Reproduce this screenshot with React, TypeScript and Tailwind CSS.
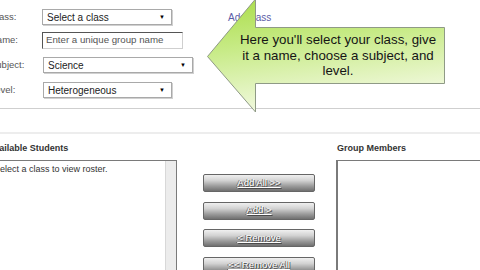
import React from 'react';

// ── Small form pieces ───────────────────────────────────────

function FakeSelect({ value, width }: { value: string; width: string }) {
    return (
        <div className={`${width} h-[16px] flex items-center justify-between pl-[4px] pr-[6px] bg-white border border-[#a9a9a9] shadow-[1px_1px_0_#d0d0d0] text-[10px] text-[#222]`}>
            <span>{value}</span>
            <span className="text-[6px] text-black">▼</span>
        </div>
    );
}

function FormRow({ label, children, className = '' }: { label: string; children: React.ReactNode; className?: string }) {
    return (
        <div className={`flex items-center ${className}`}>
            <div className="w-[52px] text-[9.5px] text-[#555]">{label}</div>
            {children}
        </div>
    );
}

function MoveButton({ label }: { label: string }) {
    return (
        <button className="w-[112px] h-[18px] rounded-[2px] border border-[#666] bg-[linear-gradient(180deg,#f0f0f0_0%,#d2d2d2_35%,#9a9a9a_70%,#707070_100%)] text-[9.5px] text-white underline [text-shadow:1px_1px_0_#4a4a4a,-1px_0_0_#6a6a6a] flex items-center justify-center">
            {label}
        </button>
    );
}

// ── Callout arrow overlay ───────────────────────────────────

function Callout() {
    return (
        <div className="absolute left-0 top-0 w-[480px] h-[120px] pointer-events-none">
            <svg width="480" height="120" className="absolute left-0 top-0">
                <defs>
                    <linearGradient id="green" x1="0" y1="0" x2="0.25" y2="1">
                        <stop offset="0%" stopColor="#aadd48" />
                        <stop offset="45%" stopColor="#c8eb88" />
                        <stop offset="100%" stopColor="#f2f9e0" />
                    </linearGradient>
                </defs>
                <polygon
                    points="207.5,56.5 255.5,-1 255.5,27.5 444.5,27.5 444.5,83.5 255.5,83.5 255.5,112"
                    fill="url(#green)"
                    stroke="#8f9a86"
                    strokeWidth="1"
                />
            </svg>
            <div className="absolute left-[213px] top-[32px] w-[250px] text-center text-[13.3px] leading-[15.5px] text-[#151515]">
                Here you'll select your class, give
                <br />
                it a name, choose a subject, and
                <br />
                level.
            </div>
        </div>
    );
}

export default function App() {
    return (
        <div className="relative w-[480px] h-[270px] overflow-hidden bg-white" style={{ fontFamily: '"Liberation Sans", Arial, sans-serif' }}>
            <div className="ml-[-10px] w-[500px]">
                {/* ── Group settings ──────────────────────── */}
                <div className="pt-[9px] h-[108px]">
                    <FormRow label="Class:">
                        <FakeSelect value="Select a class" width="w-[130px]" />
                        <a className="ml-[56px] text-[10px] text-[#5c5ca6]">Add class</a>
                    </FormRow>
                    <FormRow label="Name:" className="mt-[7px]">
                        <div className="w-[141px] h-[17px] flex items-center pl-[3px] border border-[#cfcfcf] border-t-[#555] border-l-[#555] text-[9.7px] text-[#555]">
                            Enter a unique group name
                        </div>
                    </FormRow>
                    <FormRow label="Subject:" className="mt-[8px]">
                        <div className="ml-[1px]">
                            <FakeSelect value="Science" width="w-[150px]" />
                        </div>
                    </FormRow>
                    <FormRow label="Level:" className="mt-[9px]">
                        <div className="ml-[1px]">
                            <FakeSelect value="Heterogeneous" width="w-[129px]" />
                        </div>
                    </FormRow>
                </div>
                <div className="h-px bg-[#cfcfcf]" />
                <div className="h-[23px]" />
                <div className="h-[2px] bg-[#ededed]" />

                {/* ── Roster lists ────────────────────────── */}
                <div className="flex pt-[9px]">
                    <div className="w-[187px] shrink-0">
                        <div className="ml-[-2px] text-[9px] font-bold text-[#333] h-[17px] leading-[10px]">Available Students</div>
                        <div className="h-[120px] flex border-t border-r border-[#7a7a7a]">
                            <div className="flex-1 pl-[4px] pt-[2px] text-[9px] text-[#333]">Select a class to view roster.</div>
                            <div className="w-[11px] bg-[#ececec] border-l border-[#d8d8d8]" />
                        </div>
                    </div>
                    <div className="w-[159px] shrink-0 flex flex-col items-start pt-[31px] gap-[9.5px] pl-[26px]">
                        <MoveButton label="Add All >>" />
                        <MoveButton label="Add >" />
                        <MoveButton label="< Remove" />
                        <MoveButton label="<< Remove All" />
                    </div>
                    <div className="flex-1">
                        <div className="ml-[1px] text-[9px] font-bold text-[#333] h-[17px] leading-[10px]">Group Members</div>
                        <div className="h-[120px] border-t border-l-2 border-[#7a7a7a]" />
                    </div>
                </div>
            </div>
            <Callout />
        </div>
    );
}
